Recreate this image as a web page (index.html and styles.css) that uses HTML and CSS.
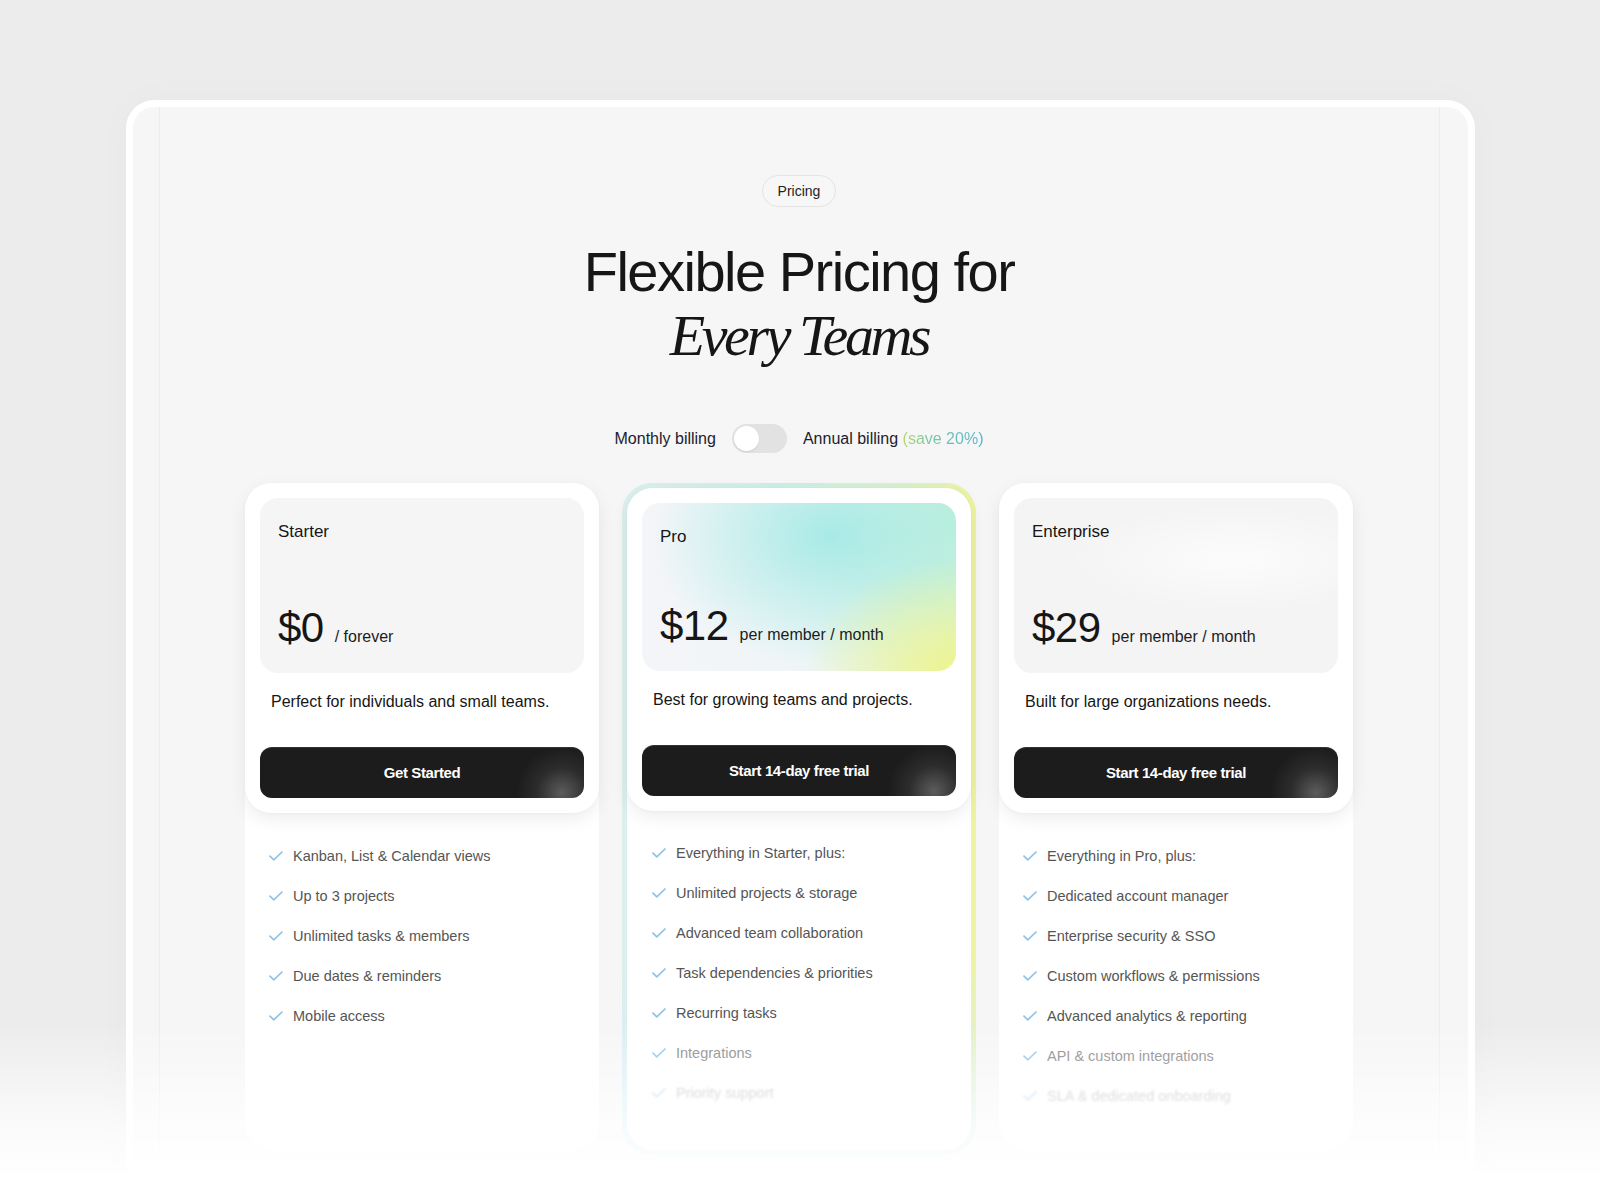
FILE: index.html
```html
<!DOCTYPE html>
<html lang="en">
<head>
<meta charset="utf-8">
<title>Pricing</title>
<link rel="stylesheet" href="styles.css">
</head>
<body>
<div class="frame">
  <div class="rail">
    <span class="pill">Pricing</span>
    <h1 class="title">Flexible Pricing for<span class="serif">Every Teams</span></h1>

    <div class="billing">
      <span class="bill-label">Monthly billing</span>
      <span class="toggle"><span class="knob"></span></span>
      <span class="bill-label">Annual billing <span class="save">(save 20%)</span></span>
    </div>

    <div class="plans">
      <!-- Starter -->
      <div class="plan">
        <div class="top">
          <div class="box">
            <div class="name">Starter</div>
            <div class="price"><span class="amount">$0</span><span class="per">/ forever</span></div>
          </div>
          <div class="desc">Perfect for individuals and small teams.</div>
          <button class="cta">Get Started</button>
        </div>
        <ul class="features">
          <li><svg class="check" viewBox="0 0 14 10"><path d="M1 5.2 L4.8 8.8 L13 1"/></svg>Kanban, List &amp; Calendar views</li>
          <li><svg class="check" viewBox="0 0 14 10"><path d="M1 5.2 L4.8 8.8 L13 1"/></svg>Up to 3 projects</li>
          <li><svg class="check" viewBox="0 0 14 10"><path d="M1 5.2 L4.8 8.8 L13 1"/></svg>Unlimited tasks &amp; members</li>
          <li><svg class="check" viewBox="0 0 14 10"><path d="M1 5.2 L4.8 8.8 L13 1"/></svg>Due dates &amp; reminders</li>
          <li><svg class="check" viewBox="0 0 14 10"><path d="M1 5.2 L4.8 8.8 L13 1"/></svg>Mobile access</li>
        </ul>
      </div>

      <!-- Pro -->
      <div class="plan-pro">
        <div class="plan plan-inner">
          <div class="top">
            <div class="box box-pro">
              <div class="name">Pro</div>
              <div class="price"><span class="amount">$12</span><span class="per">per member / month</span></div>
            </div>
            <div class="desc">Best for growing teams and projects.</div>
            <button class="cta">Start 14-day free trial</button>
          </div>
          <ul class="features features-pro">
            <li><svg class="check" viewBox="0 0 14 10"><path d="M1 5.2 L4.8 8.8 L13 1"/></svg>Everything in Starter, plus:</li>
            <li><svg class="check" viewBox="0 0 14 10"><path d="M1 5.2 L4.8 8.8 L13 1"/></svg>Unlimited projects &amp; storage</li>
            <li><svg class="check" viewBox="0 0 14 10"><path d="M1 5.2 L4.8 8.8 L13 1"/></svg>Advanced team collaboration</li>
            <li><svg class="check" viewBox="0 0 14 10"><path d="M1 5.2 L4.8 8.8 L13 1"/></svg>Task dependencies &amp; priorities</li>
            <li><svg class="check" viewBox="0 0 14 10"><path d="M1 5.2 L4.8 8.8 L13 1"/></svg>Recurring tasks</li>
            <li class="dim"><svg class="check" viewBox="0 0 14 10"><path d="M1 5.2 L4.8 8.8 L13 1"/></svg>Integrations</li>
            <li class="blur"><svg class="check" viewBox="0 0 14 10"><path d="M1 5.2 L4.8 8.8 L13 1"/></svg>Priority support</li>
          </ul>
        </div>
      </div>

      <!-- Enterprise -->
      <div class="plan">
        <div class="top">
          <div class="box box-ent">
            <div class="name">Enterprise</div>
            <div class="price"><span class="amount">$29</span><span class="per">per member / month</span></div>
          </div>
          <div class="desc">Built for large organizations needs.</div>
          <button class="cta">Start 14-day free trial</button>
        </div>
        <ul class="features">
          <li><svg class="check" viewBox="0 0 14 10"><path d="M1 5.2 L4.8 8.8 L13 1"/></svg>Everything in Pro, plus:</li>
          <li><svg class="check" viewBox="0 0 14 10"><path d="M1 5.2 L4.8 8.8 L13 1"/></svg>Dedicated account manager</li>
          <li><svg class="check" viewBox="0 0 14 10"><path d="M1 5.2 L4.8 8.8 L13 1"/></svg>Enterprise security &amp; SSO</li>
          <li><svg class="check" viewBox="0 0 14 10"><path d="M1 5.2 L4.8 8.8 L13 1"/></svg>Custom workflows &amp; permissions</li>
          <li><svg class="check" viewBox="0 0 14 10"><path d="M1 5.2 L4.8 8.8 L13 1"/></svg>Advanced analytics &amp; reporting</li>
          <li class="dim"><svg class="check" viewBox="0 0 14 10"><path d="M1 5.2 L4.8 8.8 L13 1"/></svg>API &amp; custom integrations</li>
          <li class="blur"><svg class="check" viewBox="0 0 14 10"><path d="M1 5.2 L4.8 8.8 L13 1"/></svg>SLA &amp; dedicated onboarding</li>
        </ul>
      </div>
    </div>
  </div>
</div>
<div class="fade"></div>
</body>
</html>
```

FILE: styles.css
```css
* { box-sizing: border-box; }

html, body {
  margin: 0;
  padding: 0;
}

body {
  height: 1200px;
  overflow: hidden;
  background: #ececec;
  font-family: "Liberation Sans", Arial, sans-serif;
  color: #1a1a1a;
}

.frame {
  width: 1349px;
  height: 1110px;
  margin: 100px auto 0;
  border: 7px solid #ffffff;
  border-bottom: 0;
  border-radius: 28px 28px 0 0;
  background: #f6f6f6;
  padding: 0 28px 0 26px;
  box-shadow: 0 0 40px rgba(0, 0, 0, 0.025);
}

.rail {
  height: 100%;
  border-left: 1px solid #ececec;
  border-right: 1px solid #ececec;
  display: flex;
  flex-direction: column;
  align-items: center;
  padding-top: 68px;
}

.pill {
  display: inline-block;
  height: 32px;
  line-height: 30px;
  padding: 0 15px;
  border: 1px solid #e4e4e4;
  border-radius: 16px;
  background: #f7f7f7;
  font-size: 14px;
  color: #222;
}

.title {
  margin: 33px 0 0;
  font-weight: 400;
  font-size: 56px;
  line-height: 64px;
  letter-spacing: -1.5px;
  text-align: center;
  color: #161616;
}

.serif {
  display: block;
  font-family: "Liberation Serif", "Times New Roman", serif;
  font-style: italic;
  font-size: 58px;
  letter-spacing: -3.4px;
}

.billing {
  margin-top: 56px;
  display: flex;
  align-items: center;
  gap: 16px;
  height: 29px;
}

.bill-label {
  font-size: 16px;
  color: #1c1c30;
}

.save {
  background: linear-gradient(90deg, #b4d468 0%, #7cc3a8 35%, #53b4cf 100%);
  -webkit-background-clip: text;
  background-clip: text;
  color: transparent;
}

.toggle {
  width: 55px;
  height: 29px;
  border-radius: 15px;
  background: #e2e2e2;
  padding: 2px;
  display: flex;
  align-items: center;
}

.knob {
  width: 25px;
  height: 25px;
  border-radius: 50%;
  background: #ffffff;
  box-shadow: 0 1px 2px rgba(0, 0, 0, 0.08);
}

.plans {
  margin-top: 30px;
  display: grid;
  grid-template-columns: repeat(3, 354px);
  gap: 23px;
  align-items: start;
}

.plan {
  background: #ffffff;
  border-radius: 28px;
  height: 667px;
}

.plan-pro {
  height: 672px;
  padding: 5px;
  border-radius: 30px;
  background:
    linear-gradient(180deg, rgba(255,255,255,0) 70%, #d9eef8 100%),
    linear-gradient(90deg, #dcefec 0%, #cceee7 45%, #d8f1cc 80%, #edf4a0 100%);
}

.plan-inner {
  height: 662px;
  border-radius: 26px;
}

.top {
  background: #ffffff;
  border-radius: 26px;
  padding: 15px;
  box-shadow: 0 6px 18px rgba(0, 0, 0, 0.07), 0 1px 3px rgba(0, 0, 0, 0.03);
}

.box {
  height: 175px;
  border-radius: 18px;
  background: #f5f5f5;
  padding: 24px 18px 24px;
  display: flex;
  flex-direction: column;
  justify-content: space-between;
}

.box-pro {
  height: 168px;
  background:
    radial-gradient(ellipse 150px 110px at 100% 100%, rgba(240, 245, 140, 0.95), rgba(240, 245, 140, 0) 100%),
    radial-gradient(ellipse 180px 130px at 60% 20%, rgba(168, 234, 230, 1), rgba(168, 234, 230, 0) 100%),
    radial-gradient(ellipse 140px 120px at 100% 10%, rgba(190, 240, 218, 1), rgba(190, 240, 218, 0) 100%),
    linear-gradient(90deg, #f5f5f9 0%, #eff5f7 50%, #d6f2dc 100%);
}

.box-ent {
  background:
    radial-gradient(ellipse 170px 55px at 68% 35%, rgba(255, 255, 255, 0.7), rgba(255, 255, 255, 0) 100%),
    #f4f4f4;
}

.name {
  font-size: 17px;
  line-height: 20px;
  color: #161616;
}

.price {
  display: flex;
  align-items: baseline;
  gap: 11px;
}

.amount {
  font-size: 42px;
  line-height: 42px;
  letter-spacing: -0.5px;
  color: #161616;
}

.per {
  font-size: 16px;
  color: #1c1c1c;
}

.desc {
  height: 74px;
  padding: 19px 11px 0;
  font-size: 16px;
  line-height: 20px;
  color: #161616;
}

.cta {
  display: block;
  width: 100%;
  height: 51px;
  border: 0;
  border-radius: 12px;
  background:
    radial-gradient(circle 46px at calc(100% - 22px) 90%, #5c5c5c 0%, #2c2c2c 55%, rgba(28, 28, 28, 0) 100%),
    #1c1c1c;
  box-shadow: inset 0 1px 0 rgba(255, 255, 255, 0.1);
  color: #ffffff;
  font-family: "Liberation Sans", Arial, sans-serif;
  font-size: 15px;
  font-weight: 700;
  letter-spacing: -0.4px;
  cursor: pointer;
}

.features {
  list-style: none;
  margin: 0;
  padding: 23px 24px 0;
}

.features-pro {
  padding: 22px 25px 0;
}

.features li {
  height: 40px;
  display: flex;
  align-items: center;
  gap: 10px;
  font-size: 14.5px;
  color: #555555;
}

.check {
  width: 14px;
  height: 10px;
  flex: none;
  fill: none;
  stroke: #8ec3e6;
  stroke-width: 1.7;
  stroke-linecap: round;
  stroke-linejoin: round;
}

.features li.dim {
  color: #7e7e7e;
}

.features li.blur {
  color: #9a9a9a;
  opacity: 0.7;
  filter: blur(1.2px);
}

.fade {
  position: fixed;
  left: 0;
  right: 0;
  bottom: 0;
  height: 180px;
  pointer-events: none;
  background: linear-gradient(180deg, rgba(255, 255, 255, 0) 0%, rgba(255, 255, 255, 0.7) 55%, #ffffff 90%);
}
```
